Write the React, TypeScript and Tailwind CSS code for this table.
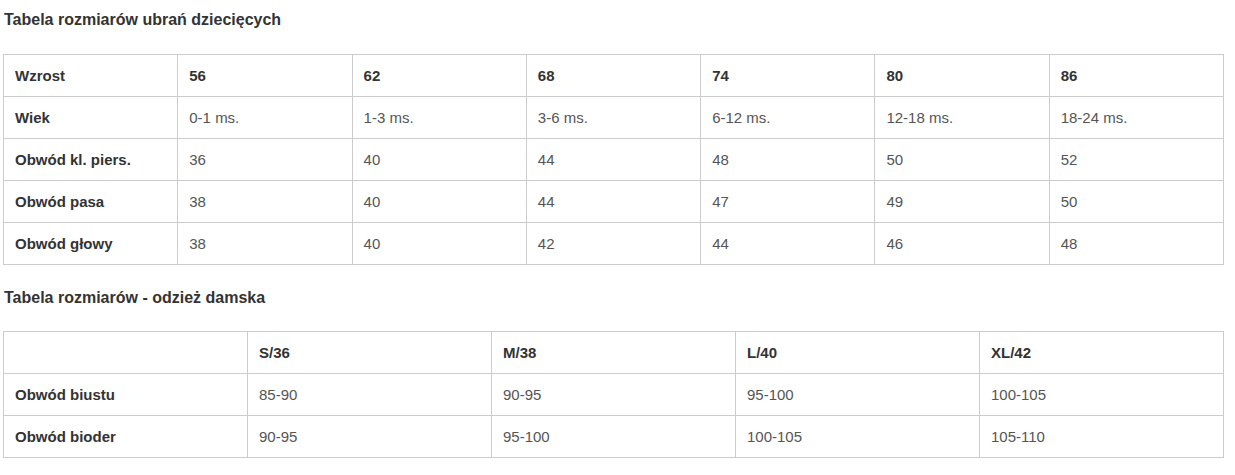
import React from 'react';

const kidsHeader = ['Wzrost', '56', '62', '68', '74', '80', '86'];
const kidsRows = [
  ['Wiek', '0-1 ms.', '1-3 ms.', '3-6 ms.', '6-12 ms.', '12-18 ms.', '18-24 ms.'],
  ['Obwód kl. piers.', '36', '40', '44', '48', '50', '52'],
  ['Obwód pasa', '38', '40', '44', '47', '49', '50'],
  ['Obwód głowy', '38', '40', '42', '44', '46', '48'],
];

const womenHeader = ['', 'S/36', 'M/38', 'L/40', 'XL/42'];
const womenRows = [
  ['Obwód biustu', '85-90', '90-95', '95-100', '100-105'],
  ['Obwód bioder', '90-95', '95-100', '100-105', '105-110'],
];

function SizeTable({ header, rows }: { header: string[]; rows: string[][] }) {
  return (
    <table className="w-[1221px] table-fixed border-collapse text-[15px] leading-[18px]">
      <tbody>
        <tr className="h-[42px]">
          {header.map((cell, i) => (
            <td key={i} className="border border-[#cccccc] px-[11px] align-middle font-bold text-[#333333]">
              {cell}
            </td>
          ))}
        </tr>
        {rows.map((row, r) => (
          <tr key={r} className="h-[42px]">
            {row.map((cell, i) => (
              <td
                key={i}
                className={`border border-[#cccccc] px-[11px] align-middle ${
                  i === 0 ? 'font-bold text-[#333333]' : 'text-[#555555]'
                }`}
              >
                {cell}
              </td>
            ))}
          </tr>
        ))}
      </tbody>
    </table>
  );
}

export default function App() {
  return (
    <div className="min-h-[475px] w-[1235px] bg-white pl-[3px] font-['Liberation_Sans',Arial,sans-serif]">
      <h2 className="pt-[11px] pl-px text-[16px] font-bold leading-[18px] text-[#333333]">
        Tabela rozmiarów ubrań dziecięcych
      </h2>
      <div className="mt-[25px]">
        <SizeTable header={kidsHeader} rows={kidsRows} />
      </div>
      <h2 className="mt-[24px] pl-px text-[16px] font-bold leading-[18px] text-[#333333]">
        Tabela rozmiarów - odzież damska
      </h2>
      <div className="mt-[24px]">
        <SizeTable header={womenHeader} rows={womenRows} />
      </div>
    </div>
  );
}
